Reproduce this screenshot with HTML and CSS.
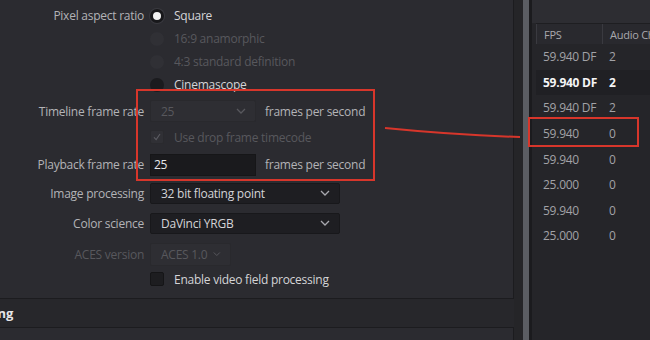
FILE: index.html
```html
<!DOCTYPE html>
<html lang="en">
<head>
  <meta charset="UTF-8" />
  <title>Project settings</title>
  <link rel="stylesheet" href="styles.css">
</head>
<body>
  <div class="screen">
    <div class="left">
      <div class="card">
        <div class="row row-radio">
          <span class="label">Pixel aspect ratio</span>
          <span class="option"><i class="radio checked"></i>Square</span>
        </div>
        <div class="row row-radio">
          <span></span>
          <span class="option disabled"><i class="radio"></i>16:9 anamorphic</span>
        </div>
        <div class="row row-radio">
          <span></span>
          <span class="option disabled"><i class="radio"></i>4:3 standard definition</span>
        </div>
        <div class="row row-radio">
          <span></span>
          <span class="option"><i class="radio dark"></i>Cinemascope</span>
        </div>

        <div class="row row-timeline">
          <span class="label">Timeline frame rate</span>
          <span class="field">
            <span class="select select-small disabled">25<svg class="chevron" viewBox="0 0 10 6"><path d="M1 1 L5 5 L9 1"/></svg></span>
            <span class="unit">frames per second</span>
          </span>
        </div>
        <div class="row row-drop">
          <span></span>
          <span class="option disabled"><i class="check checked"><svg viewBox="0 0 14 14"><path d="M3.5 7.5 L6 10 L10.5 3.5"/></svg></i>Use drop frame timecode</span>
        </div>
        <div class="row row-playback">
          <span class="label">Playback frame rate</span>
          <span class="field">
            <span class="input">25</span>
            <span class="unit">frames per second</span>
          </span>
        </div>

        <div class="row row-image">
          <span class="label">Image processing</span>
          <span class="select select-wide">32 bit floating point<svg class="chevron" viewBox="0 0 10 6"><path d="M1 1 L5 5 L9 1"/></svg></span>
        </div>
        <div class="row row-color">
          <span class="label">Color science</span>
          <span class="select select-wide">DaVinci YRGB<svg class="chevron" viewBox="0 0 10 6"><path d="M1 1 L5 5 L9 1"/></svg></span>
        </div>
        <div class="row row-aces">
          <span class="label disabled">ACES version</span>
          <span class="select select-aces disabled">ACES 1.0<svg class="chevron" viewBox="0 0 10 6"><path d="M1 1 L5 5 L9 1"/></svg></span>
        </div>
        <div class="row row-field">
          <span></span>
          <span class="option"><i class="check"></i>Enable video field processing</span>
        </div>
      </div>

      <div class="section-head"><span class="section-title">Video Monitoring</span></div>
      <div class="card card-next"></div>
    </div>

    <div class="gutter"></div>
    <div class="scrollbar"></div>
    <div class="edge"></div>

    <div class="right">
      <div class="right-top"></div>
      <div class="table">
        <div class="thead">
          <span class="col-fps">FPS</span>
          <span class="col-audio">Audio Channels</span>
        </div>
        <div class="trow"><span class="col-fps">59.940 DF</span><span class="col-audio">2</span></div>
        <div class="trow selected"><span class="col-fps">59.940 DF</span><span class="col-audio">2</span></div>
        <div class="trow"><span class="col-fps">59.940 DF</span><span class="col-audio">2</span></div>
        <div class="trow"><span class="col-fps">59.940</span><span class="col-audio">0</span></div>
        <div class="trow"><span class="col-fps">59.940</span><span class="col-audio">0</span></div>
        <div class="trow"><span class="col-fps">25.000</span><span class="col-audio">0</span></div>
        <div class="trow"><span class="col-fps">59.940</span><span class="col-audio">0</span></div>
        <div class="trow"><span class="col-fps">25.000</span><span class="col-audio">0</span></div>
      </div>
    </div>

    <!-- annotation drawn over the screenshot -->
    <svg class="marks" viewBox="0 0 650 340">
      <rect x="137" y="90" width="237" height="90"/>
      <path d="M385 128 Q 455 135 520 137"/>
      <rect x="529" y="118" width="109" height="28"/>
    </svg>
  </div>
</body>
</html>
```

FILE: styles.css
```css
*, *::before, *::after {
  box-sizing: border-box;
}

body {
  margin: 0;
  background: #232327;
  font-family: "Open Sans", "DejaVu Sans", sans-serif;
  font-size: 12px;
  letter-spacing: -0.25px;
  color: #b3b3b7;
  overflow: hidden;
}

.screen {
  position: relative;
  width: 650px;
  height: 340px;
  display: flex;
  overflow: hidden;
}

/* left settings column */

.left {
  width: 514px;
  flex-shrink: 0;
  display: flex;
  flex-direction: column;
  background: #27272b;
}

.card {
  height: 299px;
  padding-top: 4px;
  background: #2b2b30;
  border-right: 1px solid #1c1c1f;
  border-bottom: 1px solid #1c1c1f;
  display: flex;
  flex-direction: column;
}

.card-next {
  flex: 1;
  height: auto;
  padding: 0;
  border-top: 1px solid #1c1c1f;
  border-bottom: none;
}

.row {
  display: grid;
  grid-template-columns: 144px auto;
  column-gap: 6px;
  align-items: center;
}

.row-radio { height: 23px; }
.row-timeline { height: 30px; }
.row-drop { height: 22px; }
.row-playback { height: 33px; }
.row-image { height: 24px; }
.row-color { height: 36px; }
.row-aces { height: 26px; }
.row-field { height: 24px; }

.label {
  text-align: right;
  white-space: nowrap;
  color: #b3b3b7;
}

.label.disabled {
  color: #58585d;
}

.option {
  display: flex;
  align-items: center;
  gap: 10px;
  color: #d4d4d7;
  white-space: nowrap;
}

.option.disabled {
  color: #58585d;
}

.radio {
  width: 14px;
  height: 14px;
  border-radius: 50%;
  background: #303035;
}

.radio.dark {
  background: #1b1b1e;
}

.radio.checked {
  background: #f2f2f2;
  border: 3px solid #18181b;
  box-shadow: 0 0 0 1px #3a3a40;
}

.check {
  width: 14px;
  height: 14px;
  border-radius: 2px;
  background: #1d1d20;
  border: 1px solid #151517;
  display: flex;
}

.check.checked {
  background: #303035;
  border-color: #2a2a2e;
}

.check svg {
  width: 12px;
  height: 12px;
  fill: none;
  stroke: #5c5c62;
  stroke-width: 1.3;
}

.field {
  display: flex;
  align-items: center;
  gap: 9px;
}

.unit {
  color: #b3b3b7;
  white-space: nowrap;
}

.select {
  height: 21px;
  display: flex;
  align-items: center;
  justify-content: space-between;
  padding: 0 9px 0 10px;
  background: #1e1e22;
  border: 1px solid #18181b;
  border-radius: 2px;
  color: #d4d4d7;
  white-space: nowrap;
}

.select.disabled {
  background: #2e2e33;
  border-color: #29292d;
  color: #58585d;
}

.select-small { width: 106px; height: 22px; }
.select-wide { width: 190px; height: 21px; }
.select-aces { width: 81px; height: 23px; justify-content: flex-start; gap: 6px; }

.chevron {
  width: 10px;
  height: 6px;
  fill: none;
  stroke: #a8a8ae;
  stroke-width: 1.3;
}

.select.disabled .chevron {
  stroke: #58585d;
}

.input {
  width: 106px;
  height: 22px;
  display: flex;
  align-items: center;
  padding-left: 3px;
  background: #1a1a1d;
  border: 1px solid #161618;
  color: #e8e8ea;
}

.section-head {
  height: 28px;
  display: flex;
  align-items: center;
}

.section-title {
  width: 13px;
  display: flex;
  justify-content: flex-end;
  white-space: nowrap;
  font-weight: 700;
  font-size: 13px;
  color: #e6e6e8;
}

/* divider between panels */

.gutter {
  width: 9px;
  flex-shrink: 0;
  background: #252528;
}

.scrollbar {
  width: 6px;
  flex-shrink: 0;
  background: #5b5d63;
}

.edge {
  width: 3px;
  flex-shrink: 0;
  background: #1b1b1e;
}

/* right clip table */

.right {
  flex: 1;
  display: flex;
  flex-direction: column;
  background: #252529;
}

.right-top {
  height: 23px;
  background: #2d2d32;
}

.table {
  padding-left: 4px;
}

.thead {
  height: 21px;
  display: flex;
  align-items: center;
  background: #29292e;
  border-top: 1px solid #1e1e21;
  font-size: 11px;
  color: #a8a8ad;
}

.thead span {
  height: 100%;
  display: flex;
  align-items: center;
  border-left: 1px solid #3a3a40;
}

.trow {
  height: 25.6px;
  display: flex;
  align-items: center;
  color: #a2a2a7;
}

.trow.selected {
  background: #202024;
  color: #f4f4f6;
  font-weight: 700;
}

.col-fps {
  width: 66px;
  padding-left: 7px;
  white-space: nowrap;
}

.col-audio {
  padding-left: 7px;
  white-space: nowrap;
}

/* red annotation overlay */

.marks {
  position: absolute;
  inset: 0;
  width: 650px;
  height: 340px;
  fill: none;
  stroke: #d7362b;
  stroke-width: 2;
  pointer-events: none;
}
```
